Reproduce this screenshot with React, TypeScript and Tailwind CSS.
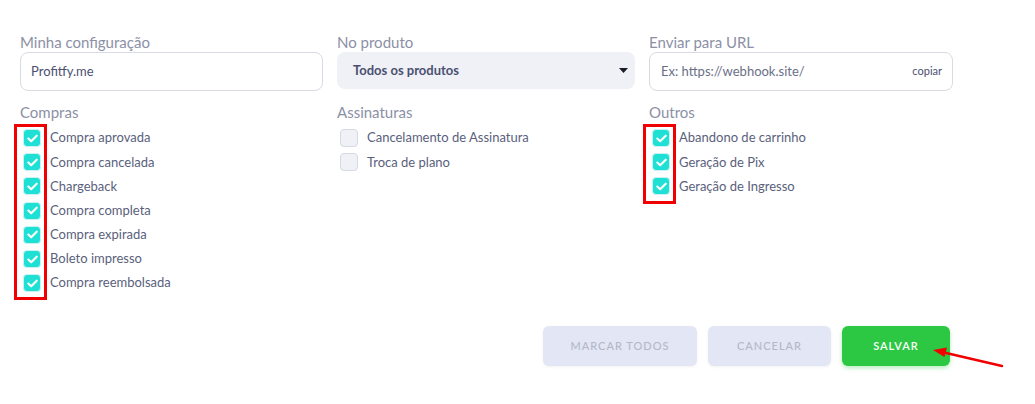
import React, { useState } from 'react';

type Item = { id: string; label: string };

const compras: Item[] = [
  { id: 'aprovada', label: 'Compra aprovada' },
  { id: 'cancelada', label: 'Compra cancelada' },
  { id: 'chargeback', label: 'Chargeback' },
  { id: 'completa', label: 'Compra completa' },
  { id: 'expirada', label: 'Compra expirada' },
  { id: 'boleto', label: 'Boleto impresso' },
  { id: 'reembolsada', label: 'Compra reembolsada' },
];

const assinaturas: Item[] = [
  { id: 'cancel-assinatura', label: 'Cancelamento de Assinatura' },
  { id: 'troca', label: 'Troca de plano' },
];

const outros: Item[] = [
  { id: 'abandono', label: 'Abandono de carrinho' },
  { id: 'pix', label: 'Geração de Pix' },
  { id: 'ingresso', label: 'Geração de Ingresso' },
];

const Checkbox = ({ checked }: { checked: boolean }) => (
  <span
    className={
      checked
        ? 'flex h-[18px] w-[18px] shrink-0 items-center justify-center rounded-[4px] border border-[#c9f3f0] bg-[#1ee0d5]'
        : 'flex h-[18px] w-[18px] shrink-0 items-center justify-center rounded-[4px] border border-[#d6d9e2] bg-[#eff1f6]'
    }
  >
    {checked && (
      <svg width="11" height="9" viewBox="0 0 11 9" fill="none">
        <path d="M1.3 4.5L4.2 7.3L9.7 1.7" stroke="white" strokeWidth="2.1" strokeLinecap="round" strokeLinejoin="round" />
      </svg>
    )}
  </span>
);

const CheckList = ({
  items,
  checked,
  toggle,
  marked,
}: {
  items: Item[];
  checked: Record<string, boolean>;
  toggle: (id: string) => void;
  marked?: boolean;
}) => (
  <div className="relative mt-[4px] flex flex-col">
    {marked && (
      <div className="pointer-events-none absolute -top-[2px] -bottom-[5px] -left-[6px] w-[33px] border-[3px] border-[#f00000]" />
    )}
    {items.map((it) => (
      <label
        key={it.id}
        onClick={() => toggle(it.id)}
        className="flex h-[24.2px] cursor-pointer items-center gap-[9px] pl-[3px] text-[13px] text-[#5a5f7c]"
      >
        <Checkbox checked={!!checked[it.id]} />
        <span>{it.label}</span>
      </label>
    ))}
  </div>
);

export default function App() {
  const [checked, setChecked] = useState<Record<string, boolean>>({
    aprovada: true,
    cancelada: true,
    chargeback: true,
    completa: true,
    expirada: true,
    boleto: true,
    reembolsada: true,
    abandono: true,
    pix: true,
    ingresso: true,
  });
  const toggle = (id: string) => setChecked((c) => ({ ...c, [id]: !c[id] }));

  return (
    <div className="relative h-[404px] w-[1035px] bg-white font-['Lato',sans-serif]">
      <div className="w-[973px] px-[20px] pt-[32px]">
        <div className="grid grid-cols-[303px_298px_304px] gap-x-[14px]">
          <div>
            <div className="h-[20px] text-[15px] leading-[20px] text-[#8c90a6]">Minha configuração</div>
            <div className="flex h-[39px] items-center rounded-[8px] border border-[#d9dbe4] px-[10px] text-[13px] text-[#4b5070]">
              Profitfy.me
            </div>
          </div>
          <div>
            <div className="h-[20px] text-[15px] leading-[20px] text-[#8c90a6]">No produto</div>
            <div className="flex h-[37px] items-center justify-between rounded-[8px] bg-[#eff1f6] pr-[7px] pl-[16px] text-[13px] font-bold text-[#4b5070]">
              <span>Todos os produtos</span>
              <svg width="9" height="5" viewBox="0 0 9 5">
                <path d="M0 0H9L4.5 5Z" fill="#1c1c28" />
              </svg>
            </div>
          </div>
          <div>
            <div className="h-[20px] text-[15px] leading-[20px] text-[#8c90a6]">Enviar para URL</div>
            <div className="flex h-[39px] items-center justify-between rounded-[8px] border border-[#d9dbe4] pr-[10px] pl-[11px]">
              <span className="text-[13px] text-[#6a6f88]">Ex: https://webhook.site/</span>
              <span className="text-[11px] text-[#4b5070]">copiar</span>
            </div>
          </div>
        </div>

        <div className="mt-[11px] grid grid-cols-[303px_298px_304px] gap-x-[14px]">
          <div>
            <div className="h-[20px] text-[15px] leading-[20px] text-[#8c90a6]">Compras</div>
            <CheckList items={compras} checked={checked} toggle={toggle} marked />
          </div>
          <div>
            <div className="h-[20px] text-[15px] leading-[20px] text-[#8c90a6]">Assinaturas</div>
            <CheckList items={assinaturas} checked={checked} toggle={toggle} />
          </div>
          <div>
            <div className="h-[20px] text-[15px] leading-[20px] text-[#8c90a6]">Outros</div>
            <CheckList items={outros} checked={checked} toggle={toggle} marked />
          </div>
        </div>

        <div className="mt-[31px] flex justify-end gap-[11px] pr-[3px]">
          <button className="h-[40px] w-[154px] rounded-[6px] bg-[#e3e6f4] text-[11px] font-medium tracking-[0.09em] text-[#b4b8ca] shadow-[0_1px_3px_rgba(0,0,0,0.06)]">
            MARCAR TODOS
          </button>
          <button className="h-[40px] w-[123px] rounded-[6px] bg-[#e3e6f4] text-[11px] font-medium tracking-[0.09em] text-[#b4b8ca] shadow-[0_1px_3px_rgba(0,0,0,0.06)]">
            CANCELAR
          </button>
          <button className="h-[40px] w-[108px] rounded-[6px] bg-[#2cc843] text-[11px] font-semibold tracking-[0.09em] text-white shadow-[0_2px_4px_rgba(44,200,67,0.35)]">
            SALVAR
          </button>
        </div>
      </div>

      <svg className="pointer-events-none absolute top-[340px] left-[928px]" width="80" height="32" viewBox="0 0 80 32">
        <path d="M74 26L16 12.5" stroke="#f00000" strokeWidth="2.4" strokeLinecap="round" />
        <path d="M5 10L19 7.5L16.5 17Z" fill="#f00000" />
      </svg>
    </div>
  );
}
